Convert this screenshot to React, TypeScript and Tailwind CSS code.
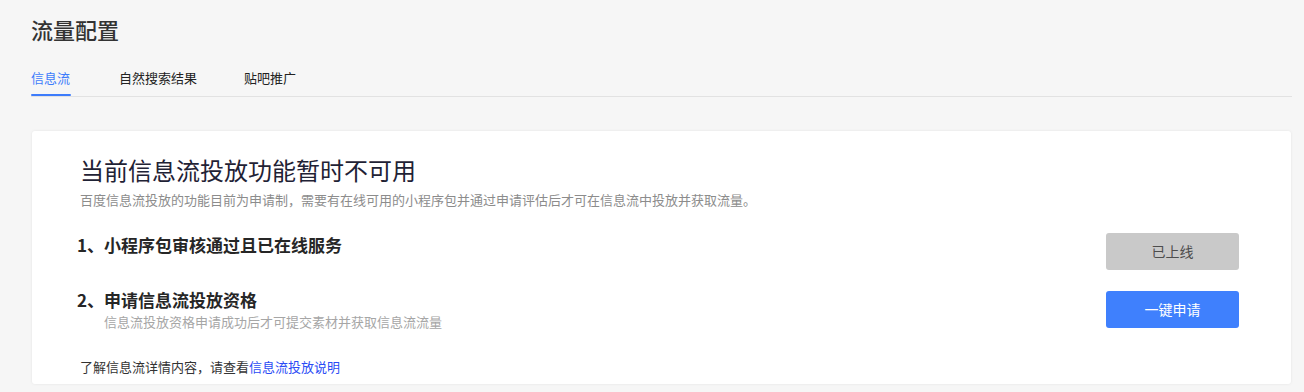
import React from "react";

const font = { fontFamily: '"Noto Sans CJK SC", "Noto Sans", sans-serif' };

export default function App() {
  return (
    <div className="w-[1304px] h-[392px] bg-[#f6f6f6] overflow-hidden" style={font}>
      <div className="pl-[31px] pr-[12px]">
        <div className="h-[58px] flex items-center">
          <h1 className="text-[22px] leading-none text-[#333] font-medium">流量配置</h1>
        </div>
        <div className="flex border-b border-[#e2e2e2]">
          <div className="flex flex-col items-stretch mr-[48px]">
            <div className="h-[36px] pt-[4px] flex items-center text-[13px] text-[#3d7cfb]">信息流</div>
            <div className="h-[2px] bg-[#3d7cfb] rounded-full w-[40px]" />
          </div>
          <div className="h-[36px] pt-[4px] flex items-center text-[13px] text-[#222] mr-[47px]">自然搜索结果</div>
          <div className="h-[36px] pt-[4px] flex items-center text-[13px] text-[#222]">贴吧推广</div>
        </div>
      </div>
      <div className="ml-[32px] mt-[34px] w-[1259px] h-[253px] bg-white rounded-[3px] shadow-[0_0_3px_rgba(0,0,0,0.08)] pl-[48px] pr-[52px] pt-[24px]">
        <div className="h-[30px] flex items-center text-[24px] leading-none text-[#1f2235]">当前信息流投放功能暂时不可用</div>
        <div className="h-[16px] mt-[7px] flex items-center text-[13px] text-[#8c8c8c]">
          百度信息流投放的功能目前为申请制，需要有在线可用的小程序包并通过申请评估后才可在信息流中投放并获取流量。
        </div>
        <div className="flex items-start justify-between mt-[25px]">
          <div className="text-[17px] leading-[20px] font-bold text-[#262626] -ml-[3px] mt-[2px]">1、小程序包审核通过且已在线服务</div>
          <button className="w-[133px] h-[37px] rounded-[3px] bg-[#c9c9c9] text-[14px] text-[#4d4d4d]">已上线</button>
        </div>
        <div className="flex items-start justify-between mt-[21px]">
          <div className="flex flex-col -mt-[1px]">
            <div className="text-[17px] leading-[20px] font-bold text-[#262626] -ml-[3px]">2、申请信息流投放资格</div>
            <div className="text-[13px] leading-[16px] text-[#a6a6a6] pl-[24px] mt-[4px]">信息流投放资格申请成功后才可提交素材并获取信息流流量</div>
          </div>
          <button className="w-[133px] h-[37px] rounded-[3px] bg-[#3f80fd] text-[14px] text-white">一键申请</button>
        </div>
        <div className="mt-[29px] text-[13px] leading-[16px] text-[#333]">
          了解信息流详情内容，请查看<span className="text-[#2a4bf5]">信息流投放说明</span>
        </div>
      </div>
    </div>
  );
}
